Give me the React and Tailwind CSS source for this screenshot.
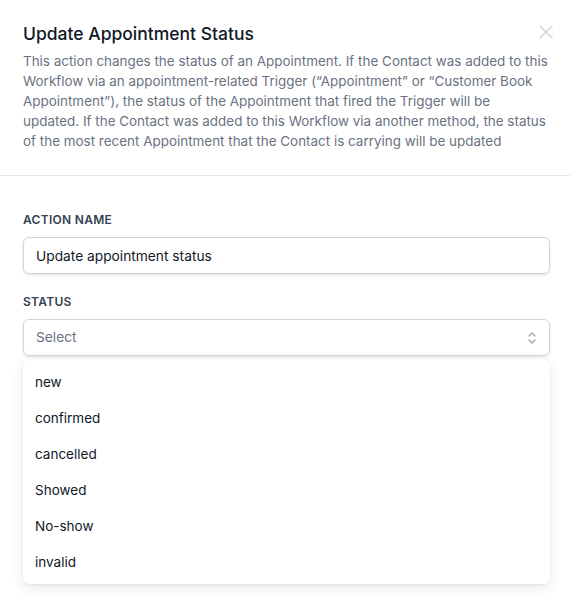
import React, { useState } from 'react';

const statuses = ['new', 'confirmed', 'cancelled', 'Showed', 'No-show', 'invalid'];

const App = () => {
    const [actionName, setActionName] = useState('Update appointment status');

    return (
        <div className="min-h-screen bg-white font-['Inter','Liberation_Sans',sans-serif] text-gray-900">
            {/* Header */}
            <div className="pl-[23px] pr-5 pt-5 pb-6 border-b border-gray-200">
                <div className="flex items-start justify-between">
                    <h2 className="text-[17.5px] leading-7 font-medium text-gray-900">Update Appointment Status</h2>
                    <button className="mt-[5px] mr-[-3px] text-gray-300">
                        <svg width="14" height="14" viewBox="0 0 14 14" fill="none" stroke="currentColor" strokeWidth="1.5" strokeLinecap="round">
                            <path d="M1 1L13 13M13 1L1 13" />
                        </svg>
                    </button>
                </div>
                <p className="mt-[3px] mr-[1px] text-[13.45px] leading-5 text-gray-500">
                    This action changes the status of an Appointment. If the Contact was added to this Workflow via an appointment-related Trigger (“Appointment” or “Customer Book Appointment”), the status of the Appointment that fired the Trigger will be updated. If the Contact was added to this Workflow via another method, the status of the most recent Appointment that the Contact is carrying will be updated
                </p>
            </div>

            {/* Body */}
            <div className="pl-[23px] pr-5 pt-[36px]">
                <label className="block text-xs leading-4 font-semibold uppercase tracking-wide text-gray-700 mb-[9px]">
                    Action Name
                </label>
                <input
                    type="text"
                    value={actionName}
                    onChange={(e) => setActionName(e.target.value)}
                    className="block w-full h-[37px] px-3 rounded-md border border-gray-300 shadow-sm text-[13.75px] text-gray-900 focus:outline-none"
                />

                <label className="block mt-5 text-xs leading-4 font-semibold uppercase tracking-wide text-gray-700 mb-[9px]">
                    Status
                </label>
                <div className="relative">
                    <button className="flex items-center justify-between w-full h-[37px] pl-3 pr-3 rounded-md border border-gray-300 shadow-sm text-[13.75px] text-gray-500">
                        <span>Select</span>
                        <svg width="10" height="16" viewBox="0 0 10 16" fill="none" stroke="#9ca3af" strokeWidth="1.3" strokeLinecap="round" strokeLinejoin="round">
                            <path d="M2 6L5 3L8 6" />
                            <path d="M2 10L5 13L8 10" />
                        </svg>
                    </button>

                    {/* Dropdown */}
                    <ul className="mt-1 py-1 bg-white rounded-md shadow-[0_4px_14px_rgba(0,0,0,0.09),0_1px_3px_rgba(0,0,0,0.05)]">
                        {statuses.map((s) => (
                            <li key={s} className="h-9 flex items-center px-3 text-[13.5px] text-gray-900">
                                {s}
                            </li>
                        ))}
                    </ul>
                </div>
            </div>
        </div>
    );
};

export default App;
